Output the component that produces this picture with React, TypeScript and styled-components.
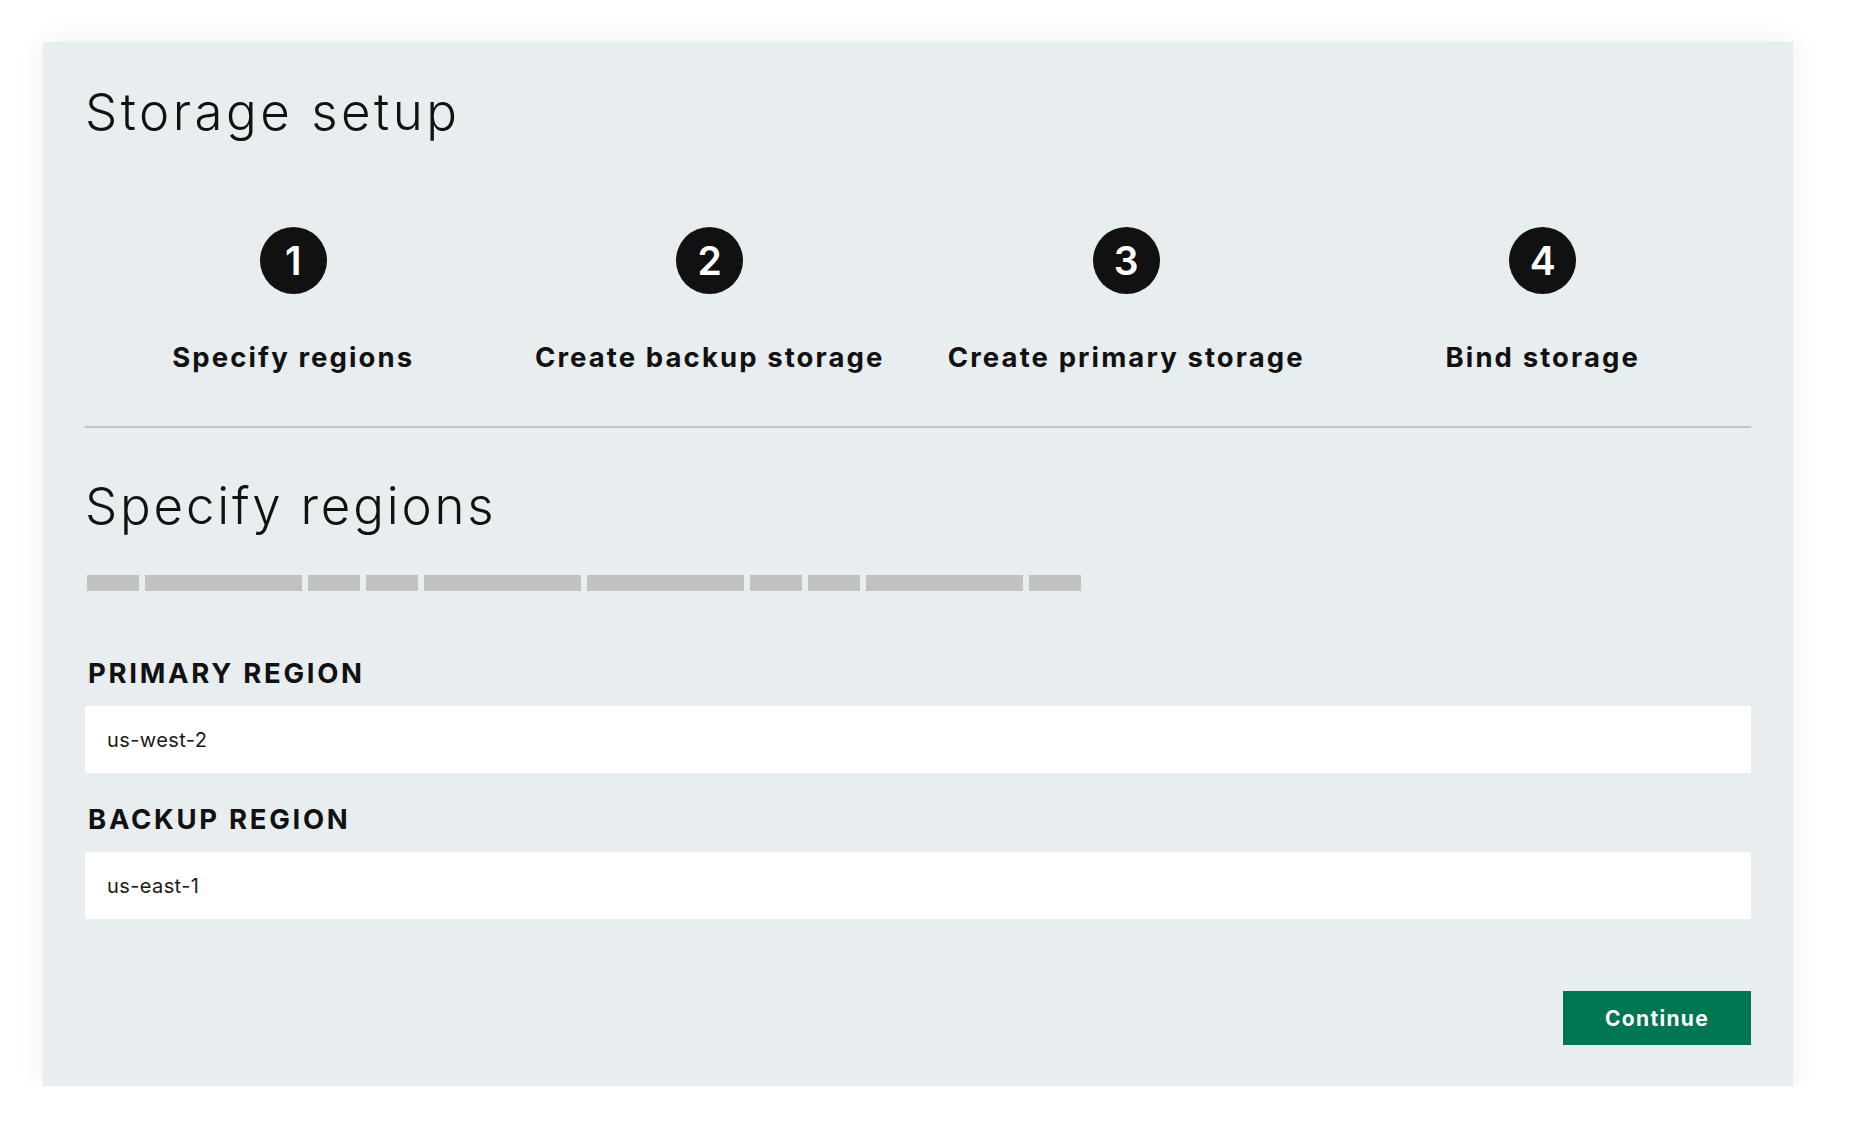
import React from "react";
import styled, { createGlobalStyle } from "styled-components";

const GlobalStyle = createGlobalStyle`
  html, body {
    margin: 0;
    padding: 0;
    background: #ffffff;
  }
  body {
    font-family: Inter, Lato, "Noto Sans", "Liberation Sans", sans-serif;
    color: #111111;
  }
`;

const Panel = styled.main`
  box-sizing: border-box;
  width: 1750px;
  margin: 42px 0 0 43px;
  padding: 39px 42px 41px 42px;
  background: #e8edf0;
  box-shadow: 0 0 28px rgba(0, 0, 0, 0.07);
`;

const Title = styled.h1`
  margin: 0;
  font-size: 51px;
  line-height: 1.2;
  font-weight: 300;
  letter-spacing: 3.5px;
`;

const Steps = styled.ol`
  list-style: none;
  margin: 85px 0 0 0;
  padding: 0;
  display: grid;
  grid-template-columns: repeat(4, 1fr);
`;

const Step = styled.li`
  display: flex;
  flex-direction: column;
  align-items: center;
`;

const StepNumber = styled.span`
  width: 67px;
  height: 67px;
  border-radius: 50%;
  background: #111111;
  color: #ffffff;
  display: flex;
  align-items: center;
  justify-content: center;
  font-size: 39px;
  font-weight: 600;
  line-height: 1;
`;

const StepLabel = styled.span`
  margin-top: 47px;
  font-size: 27.5px;
  line-height: 1.2;
  font-weight: 700;
  letter-spacing: 2.1px;
  white-space: nowrap;
`;

const Divider = styled.hr`
  margin: 52px 0 0 0;
  border: none;
  height: 2px;
  background: #c3c5c7;
`;

const SectionTitle = styled.h2`
  margin: 47px 0 0 0;
  font-size: 51px;
  line-height: 1.2;
  font-weight: 300;
  letter-spacing: 2.8px;
`;

const Skeleton = styled.div`
  display: flex;
  gap: 6px;
  margin: 39px 0 0 2px;
`;

const SkeletonBar = styled.span<{ $long?: boolean }>`
  display: block;
  width: ${(p) => (p.$long ? 157 : 52)}px;
  height: 16px;
  background: #c1c2c3;
`;

const Field = styled.div<{ $first?: boolean }>`
  margin-top: ${(p) => (p.$first ? 66 : 30)}px;
  display: flex;
  flex-direction: column;
`;

const FieldLabel = styled.label`
  margin-left: 3px;
  font-size: 27.5px;
  line-height: 1.2;
  font-weight: 700;
  letter-spacing: 2.7px;
  text-transform: uppercase;
`;

const InputBox = styled.div`
  margin-top: 16px;
  height: 67px;
  background: #ffffff;
  display: flex;
  align-items: center;
  padding-left: 22px;
  font-size: 20px;
  font-weight: 400;
  letter-spacing: 0.4px;
  color: #1a1a1a;
`;

const Actions = styled.div`
  margin-top: 72px;
  display: flex;
  justify-content: flex-end;
`;

const ContinueButton = styled.button`
  width: 188px;
  height: 54px;
  border: none;
  background: #007652;
  color: #ffffff;
  font-family: Inter, Lato, "Noto Sans", sans-serif;
  font-size: 21px;
  font-weight: 700;
  letter-spacing: 1.3px;
  cursor: pointer;
`;

const steps = [
  "Specify regions",
  "Create backup storage",
  "Create primary storage",
  "Bind storage",
];

const bars = [false, true, false, false, true, true, false, false, true, false];

export default function App() {
  return (
    <>
      <GlobalStyle />
      <Panel>
        <Title>Storage setup</Title>
        <Steps>
          {steps.map((label, i) => (
            <Step key={label}>
              <StepNumber>{i + 1}</StepNumber>
              <StepLabel>{label}</StepLabel>
            </Step>
          ))}
        </Steps>
        <Divider />
        <SectionTitle>Specify regions</SectionTitle>
        <Skeleton>
          {bars.map((long, i) => (
            <SkeletonBar key={i} $long={long} />
          ))}
        </Skeleton>
        <Field $first>
          <FieldLabel>Primary region</FieldLabel>
          <InputBox>us-west-2</InputBox>
        </Field>
        <Field>
          <FieldLabel>Backup region</FieldLabel>
          <InputBox>us-east-1</InputBox>
        </Field>
        <Actions>
          <ContinueButton>Continue</ContinueButton>
        </Actions>
      </Panel>
    </>
  );
}
